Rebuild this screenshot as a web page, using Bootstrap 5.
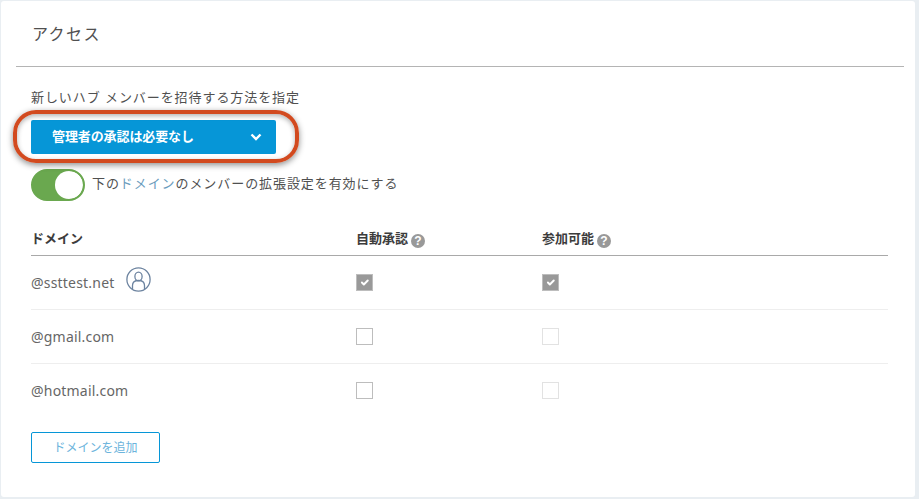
<!DOCTYPE html>
<html lang="ja">
<head>
    <meta charset="UTF-8">
    <meta name="viewport" content="width=device-width, initial-scale=1.0">
    <link rel="stylesheet" href="https://cdn.jsdelivr.net/npm/bootstrap@5.3.2/dist/css/bootstrap.min.css">
    <title>アクセス</title>
    <style>
        html, body { height: 100%; }
        body {
            background: #e9eef2;
            color: #505050;
            font-family: "Noto Sans", "Noto Sans CJK JP", sans-serif;
            font-size: 13px;
            padding: 1px 4px 2px 1px;
        }
        .panel { background: #fff; height: 100%; border-radius: 3px; overflow: hidden; }
        .panel-head { margin: 0 11px 0 15px; height: 66px; padding: 20px 16px 0; border-bottom: 1px solid #b4b4b4; }
        .panel-head h1 { font-size: 16px; font-weight: 400; letter-spacing: 1.4px; line-height: 26px; margin: 0; color: #505050; }
        .panel-body { padding: 21px 27px 0 30px; }
        .invite-label { line-height: 18px; margin-bottom: 14px; letter-spacing: .93px; }
        .select-wrap { position: relative; width: 245px; height: 34px; margin-bottom: 15px; }
        .select-btn {
            width: 245px; height: 34px; padding: 0 14px 0 21px;
            background: #0696d7; border: 0; border-radius: 2px;
            color: #fff; font-size: 13px; font-weight: 700; letter-spacing: -.1px;
        }
        .select-btn:hover, .select-btn:active { background: #0696d7 !important; color: #fff !important; }
        .callout {
            position: absolute; left: -18px; top: -10px; width: 286px; height: 53px;
            border: 4px solid #d24a1f; border-radius: 23px;
            box-shadow: 0 2px 6px rgba(0,0,0,.45), inset 0 2px 5px rgba(0,0,0,.3);
            pointer-events: none;
        }
        .switch-row { height: 32px; }
        .form-switch.toggle-box { padding: 0; margin: 0; min-height: 0; height: 32px; }
        .form-switch .toggle-input {
            width: 54px; height: 32px; margin: 0; float: none; display: block;
            background-color: #6aa84f; border: 2px solid #6aa84f; border-radius: 16px;
            background-image: url("data:image/svg+xml,%3csvg xmlns='http://www.w3.org/2000/svg' viewBox='-4 -4 8 8'%3e%3ccircle r='4' fill='%23fff'/%3e%3c/svg%3e");
            background-position: right center; background-size: contain;
            box-shadow: none;
        }
        .switch-text { margin-left: 7px; letter-spacing: .92px; position: relative; top: -1px; }
        .dept { color: #6a9cbd; }
        .domain-table { width: 857px; table-layout: fixed; margin: 16px 0 0; }
        .domain-table th, .domain-table td { padding: 0; background: transparent; color: inherit; }
        .domain-table thead th { height: 38px; border-bottom: 1px solid #a9a9a9; font-size: 13px; font-weight: 700; vertical-align: middle; padding-top: 6px; color: #3c3c3c; }
        .domain-table td { height: 54px; border-bottom: 1px solid #eeeeee; vertical-align: middle; font-size: 14px; color: #666; }
        .domain-table tbody tr:last-child td { border-bottom: 0; }
        .col-domain { width: 325px; }
        .col-auto-ok { width: 186px; }
        .help-dot {
            display: inline-flex; width: 14px; height: 14px; border-radius: 50%;
            background: #999; color: #fff; font-size: 12px; font-weight: 700;
            align-items: center; justify-content: center; line-height: 1; margin-left: 3px;
            vertical-align: -2px; font-family: "Liberation Sans", sans-serif;
        }
        .domain-name { letter-spacing: .2px; }
        .user-ring { margin-left: 11px; margin-top: -6px; }
        .domain-table .form-check-input {
            width: 17px; height: 17px; margin: 0; display: block; opacity: 1;
            border: 1px solid #bdbdbd; border-radius: 0; background-color: #fff;
        }
        .domain-table .form-check-input:checked { background-color: #999; border-color: #bdbdbd; background-size: 13px; }
        .domain-table .form-check-input.faint { border-color: #e2e2e2; }
        .domain-table .form-check-input.faint:checked { border-color: #bdbdbd; }
        .btn.add-btn {
            --bs-btn-border-color: #0696d7;
            --bs-btn-hover-border-color: #0696d7;
            --bs-btn-bg: #fff;
            --bs-btn-color: #6cb4dc;
            display: block; width: 129px; height: 31px; padding: 0; margin-top: 15px;
            border: 1px solid #0696d7; border-radius: 2px; background: #fff;
            color: #6cb4dc; font-size: 12px;
        }
    </style>
</head>
<body>
    <div class="panel">
        <div class="panel-head">
            <h1>アクセス</h1>
        </div>
        <div class="panel-body">
            <div class="invite-label">新しいハブ メンバーを招待する方法を指定</div>
            <div class="select-wrap">
                <button class="btn select-btn d-flex align-items-center justify-content-between" type="button">
                    <span>管理者の承認は必要なし</span>
                    <svg width="12" height="8" viewBox="0 0 12 8"><path d="M1.5 1.5 6 6l4.5-4.5" fill="none" stroke="#fff" stroke-width="2.4"/></svg>
                </button>
                <div class="callout"></div>
            </div>
            <div class="switch-row d-flex align-items-center">
                <div class="form-check form-switch toggle-box">
                    <input class="form-check-input toggle-input" type="checkbox" role="switch" checked>
                </div>
                <span class="switch-text">下の<span class="dept">ドメイン</span>のメンバーの拡張設定を有効にする</span>
            </div>
            <table class="table domain-table">
                <colgroup>
                    <col class="col-domain">
                    <col class="col-auto-ok">
                    <col>
                </colgroup>
                <thead>
                    <tr>
                        <th>ドメイン</th>
                        <th>自動承認<span class="help-dot">?</span></th>
                        <th>参加可能<span class="help-dot">?</span></th>
                    </tr>
                </thead>
                <tbody>
                    <tr>
                        <td><div class="d-flex align-items-center"><span class="domain-name">@ssttest.net</span><svg class="user-ring" width="25" height="25" viewBox="0 0 25 25" fill="none" stroke="#6d84a0" stroke-width="1.3"><circle cx="12.5" cy="12.5" r="11.6"/><ellipse cx="12.5" cy="9.5" rx="3.6" ry="4.4"/><path d="M6.5 22v-3.5c0-3 2.2-5 6-5s6 2 6 5V22"/></svg></div></td>
                        <td><input class="form-check-input" type="checkbox" checked disabled></td>
                        <td><input class="form-check-input faint" type="checkbox" checked disabled></td>
                    </tr>
                    <tr>
                        <td><span class="domain-name">@gmail.com</span></td>
                        <td><input class="form-check-input" type="checkbox" disabled></td>
                        <td><input class="form-check-input faint" type="checkbox" disabled></td>
                    </tr>
                    <tr>
                        <td><span class="domain-name">@hotmail.com</span></td>
                        <td><input class="form-check-input" type="checkbox" disabled></td>
                        <td><input class="form-check-input faint" type="checkbox" disabled></td>
                    </tr>
                </tbody>
            </table>
            <button class="btn add-btn" type="button">ドメインを追加</button>
        </div>
    </div>
    <script src="https://cdn.jsdelivr.net/npm/bootstrap@5.3.2/dist/js/bootstrap.bundle.min.js"></script>
</body>
</html>
